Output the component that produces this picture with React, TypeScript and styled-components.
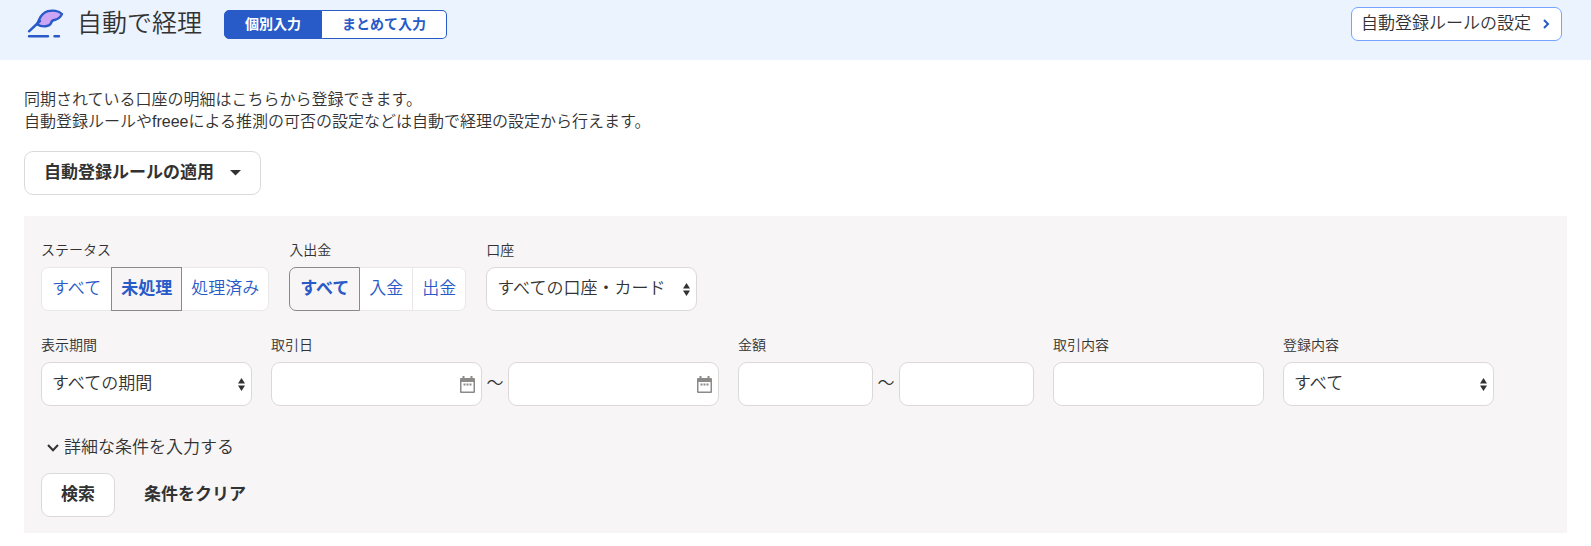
import React, { useId, useState } from "react";
import styled, { createGlobalStyle, css } from "styled-components";

const GlobalStyle = createGlobalStyle`
  *, *::before, *::after { box-sizing: border-box; }
  body {
    margin: 0;
    background: #fff;
    color: #323232;
    font-family: "Liberation Sans", "Noto Sans CJK JP", sans-serif;
    font-size: 17px;
    font-weight: 350;
    line-height: 24px;
  }
  button, input, select { font: inherit; color: inherit; }
`;

const blue = "#285ac8";
const line = "#dcd9d9";

const Header = styled.header`
  display: flex;
  align-items: flex-start;
  justify-content: space-between;
  min-height: 60px;
  padding: 7px 29px 0 27px;
  background: #ebf3ff;
`;

const Brand = styled.div`
  display: flex;
  align-items: center;
  height: 34px;
`;

const Title = styled.h1`
  margin: 0 22px 2px 13px;
  font-size: 25px;
  font-weight: 350;
  line-height: 32px;
`;

const Toggle = styled.div`
  display: flex;
  height: 29px;
`;

const ToggleButton = styled.button<{ $active: boolean }>`
  padding: 0 20px;
  border: 1px solid ${blue};
  font-size: 14px;
  font-weight: 700;
  line-height: 20px;
  color: ${(p) => (p.$active ? "#fff" : blue)};
  background: ${(p) => (p.$active ? blue : "#fff")};
  &:first-child { border-radius: 5px 0 0 5px; }
  &:last-child { border-left: 0; border-radius: 0 5px 5px 0; }
`;

const SettingsLink = styled.a`
  display: flex;
  align-items: center;
  gap: 12px;
  height: 34px;
  padding: 0 11px 0 9px;
  border: 1px solid #73a5ff;
  border-radius: 7px;
  background: #fff;
  color: inherit;
  text-decoration: none;
`;

const Main = styled.main`
  padding: 29px 24px 13px;
`;

const Lead = styled.p`
  margin: 0 0 18px;
  font-size: 16px;
  line-height: 22px;
`;

const Button = styled.button<{ $plain?: boolean }>`
  display: inline-flex;
  align-items: center;
  gap: 16px;
  height: 44px;
  padding: 0 19px;
  border: 1px solid ${(p) => (p.$plain ? "transparent" : line)};
  border-radius: 9px;
  background: ${(p) => (p.$plain ? "transparent" : "#fff")};
  font-weight: 700;
`;

const Panel = styled.form`
  display: flex;
  flex-direction: column;
  margin-top: 21px;
  padding: 24px 17px 16px;
  background: #f7f5f6;
`;

const Row = styled.div<{ $gap: number }>`
  display: flex;
  flex-wrap: wrap;
  gap: ${(p) => p.$gap}px;
  margin-bottom: 24px;
`;

const FieldBox = styled.div`
  display: flex;
  flex-direction: column;
  gap: 7px;
`;

const labelStyle = css`
  font-size: 14px;
  line-height: 20px;
`;

const Label = styled.label`
  ${labelStyle}
`;

const Caption = styled.span`
  ${labelStyle}
`;

const Segments = styled.div`
  display: flex;
`;

const Segment = styled.button<{ $active: boolean }>`
  position: relative;
  z-index: ${(p) => (p.$active ? 1 : 0)};
  height: 44px;
  padding: 0 10px;
  border: 1px solid ${(p) => (p.$active ? "#8c8989" : "#e9e7e7")};
  background: ${(p) => (p.$active ? "#f7f5f6" : "#fff")};
  color: ${blue};
  font-weight: ${(p) => (p.$active ? 700 : "inherit")};
  & + & { margin-left: -1px; padding: 0 9px; }
  &:first-child { border-radius: 7px 0 0 7px; }
  &:last-child { border-radius: 0 7px 7px 0; }
`;

const Control = styled.div`
  position: relative;
  display: flex;
`;

const boxStyle = css`
  height: 44px;
  border: 1px solid ${line};
  border-radius: 9px;
  background: #fff;
`;

const Select = styled.select`
  ${boxStyle}
  width: 211px;
  padding: 0 24px 1px 10px;
  appearance: none;
`;

const Input = styled.input<{ $short?: boolean }>`
  ${boxStyle}
  width: ${(p) => (p.$short ? 135 : 211)}px;
  padding: 0 11px;
`;

const Adornment = styled.span<{ $right: number }>`
  position: absolute;
  top: 0;
  bottom: 0;
  right: ${(p) => p.$right}px;
  display: flex;
  align-items: center;
  pointer-events: none;
`;

const Range = styled.div`
  display: flex;
  align-items: center;
`;

const Tilde = styled.span`
  width: 26px;
  text-align: center;
`;

const Details = styled.button`
  display: flex;
  align-items: center;
  align-self: flex-start;
  gap: 5px;
  margin: 6px 0 13px;
  padding: 0 6px;
  border: 0;
  background: none;
`;

const Actions = styled.div`
  display: flex;
  gap: 9px;
`;

const PenLogo = () => (
  <svg width="37" height="30" viewBox="27 10 37 30" fill="none" stroke={blue} strokeWidth="2.4" strokeLinecap="round" strokeLinejoin="round" aria-hidden="true">
    <path
      d="M37 25.2L39.2 20.5C41 16.500 44 13.4 48 12.2C52.500 11 58.500 11.700 62 15C60.500 18 58 20.200 55.200 20.700C52.500 21.100 51.200 21.800 51.200 24C49.500 27.500 42.500 28.800 37 25.2Z"
      fill="#cda5f5"
    />
    <path d="M29 32.3L40 22" />
    <path d="M29 37.2H48M54.500 37.2H59" />
  </svg>
);

const CalendarIcon = () => (
  <svg width="15" height="17" viewBox="0 0 15 17" aria-hidden="true">
    <path d="M1 2H2.500V0H4.500V2H10.500V0H12.500V2H14Q15 2 15 3V16Q15 17 14 17H1Q0 17 0 16V3Q0 2 1 2ZM1.500 6V15.500H13.500V6Z" fill="#8c8989" fillRule="evenodd" />
    <path d="M3.500 7.500h2v2h-2zM6.500 7.500h2v2h-2zM9.500 7.500h2v2h-2z" fill="#8c8989" />
  </svg>
);

const SelectArrows = () => (
  <svg width="7" height="13" viewBox="0 0 7 13" fill="#323232" aria-hidden="true">
    <path d="M3.500 0L7 5.500H0ZM0 7.500H7L3.500 13Z" />
  </svg>
);

const Caret = () => (
  <svg width="11" height="6" viewBox="0 0 11 6" fill="#323232" aria-hidden="true">
    <path d="M0 0H11L5.500 5.500Z" />
  </svg>
);

const ChevronRight = () => (
  <svg width="7" height="10" viewBox="0 0 7 10" fill="none" stroke={blue} strokeWidth="2" aria-hidden="true">
    <path d="M1 1L5 5L1 9" />
  </svg>
);

const ChevronDown = () => (
  <svg width="12" height="8" viewBox="0 0 12 8" fill="none" stroke="#323232" strokeWidth="2" aria-hidden="true">
    <path d="M1 1L6 6.200L11 1" />
  </svg>
);

function SegmentField({ label, options, initial }: { label: string; options: string[]; initial: string }) {
  const id = useId();
  const [value, setValue] = useState(initial);
  return (
    <FieldBox>
      <Caption id={id}>{label}</Caption>
      <Segments role="group" aria-labelledby={id}>
        {options.map((o) => (
          <Segment key={o} type="button" $active={o === value} aria-pressed={o === value} onClick={() => setValue(o)}>
            {o}
          </Segment>
        ))}
      </Segments>
    </FieldBox>
  );
}

function SelectField({ label, option }: { label: string; option: string }) {
  const id = useId();
  return (
    <FieldBox>
      <Label htmlFor={id}>{label}</Label>
      <Control>
        <Select id={id}>
          <option>{option}</option>
        </Select>
        <Adornment $right={7}>
          <SelectArrows />
        </Adornment>
      </Control>
    </FieldBox>
  );
}

function RangeField({ label, date }: { label: string; date?: boolean }) {
  const id = useId();
  const icon = date && (
    <Adornment $right={7}>
      <CalendarIcon />
    </Adornment>
  );
  return (
    <FieldBox>
      <Label htmlFor={id}>{label}</Label>
      <Range>
        <Control>
          <Input id={id} type="text" $short={!date} />
          {icon}
        </Control>
        <Tilde>～</Tilde>
        <Control>
          <Input type="text" $short={!date} aria-label={`${label}(終了)`} />
          {icon}
        </Control>
      </Range>
    </FieldBox>
  );
}

function TextField({ label }: { label: string }) {
  const id = useId();
  return (
    <FieldBox>
      <Label htmlFor={id}>{label}</Label>
      <Input id={id} type="text" />
    </FieldBox>
  );
}

export default function App() {
  const [mode, setMode] = useState("個別入力");
  return (
    <>
      <GlobalStyle />
      <Header>
        <Brand>
          <PenLogo />
          <Title>自動で経理</Title>
          <Toggle>
            {["個別入力", "まとめて入力"].map((m) => (
              <ToggleButton key={m} type="button" $active={m === mode} aria-pressed={m === mode} onClick={() => setMode(m)}>
                {m}
              </ToggleButton>
            ))}
          </Toggle>
        </Brand>
        <SettingsLink href="#rules">
          自動登録ルールの設定
          <ChevronRight />
        </SettingsLink>
      </Header>
      <Main>
        <Lead>
          同期されている口座の明細はこちらから登録できます。
          <br />
          自動登録ルールやfreeeによる推測の可否の設定などは自動で経理の設定から行えます。
        </Lead>
        <Button type="button">
          自動登録ルールの適用
          <Caret />
        </Button>
        <Panel onSubmit={(e) => e.preventDefault()}>
          <Row $gap={20}>
            <SegmentField label="ステータス" options={["すべて", "未処理", "処理済み"]} initial="未処理" />
            <SegmentField label="入出金" options={["すべて", "入金", "出金"]} initial="すべて" />
            <SelectField label="口座" option="すべての口座・カード" />
          </Row>
          <Row $gap={19}>
            <SelectField label="表示期間" option="すべての期間" />
            <RangeField label="取引日" date />
            <RangeField label="金額" />
            <TextField label="取引内容" />
            <SelectField label="登録内容" option="すべて" />
          </Row>
          <Details type="button">
            <ChevronDown />
            詳細な条件を入力する
          </Details>
          <Actions>
            <Button type="submit">検索</Button>
            <Button type="reset" $plain>
              条件をクリア
            </Button>
          </Actions>
        </Panel>
      </Main>
    </>
  );
}
